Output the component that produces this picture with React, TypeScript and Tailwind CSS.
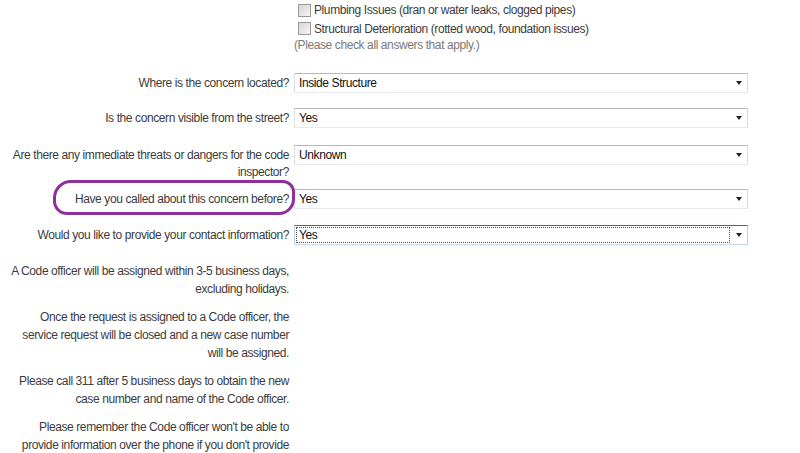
import React from "react";

const font = { fontFamily: '"Liberation Sans", Arial, sans-serif' };

function Checkbox() {
  return (
    <span className="inline-block w-[13px] h-[13px] border border-[#9a9a9a] bg-gradient-to-br from-[#d6d6d6] to-[#f4f4f4] mr-[3px] shrink-0" />
  );
}

function Arrow() {
  return (
    <span className="block w-0 h-0 border-l-[3.5px] border-r-[3.5px] border-t-[4px] border-l-transparent border-r-transparent border-t-[#222]" />
  );
}

function Select({ value, focused = false }: { value: string; focused?: boolean }) {
  if (focused) {
    return (
      <div className="relative w-[454px] h-[20px] border border-t-[#2f6ea5] border-l-[#b9cfe2] border-r-[#b9cfe2] border-b-[#c7dbea] bg-white flex items-stretch">
        <div className="flex-1 m-[1px] border border-dotted border-[#555] flex items-center pl-[2px] text-[12px] text-[#111]">
          {value}
        </div>
        <div className="w-[16px] flex items-center justify-center">
          <Arrow />
        </div>
      </div>
    );
  }
  return (
    <div className="relative w-[454px] h-[20px] border border-t-[#b9b9b9] border-l-[#dedede] border-r-[#dedede] border-b-[#e4e9ef] bg-white flex items-center">
      <div className="flex-1 pl-[4px] text-[12px] text-[#111]">{value}</div>
      <div className="w-[16px] flex items-center justify-center">
        <Arrow />
      </div>
    </div>
  );
}

function Row({
  label,
  value,
  focused,
  className = "",
}: {
  label: string;
  value: string;
  focused?: boolean;
  className?: string;
}) {
  return (
    <div className={"flex items-start gap-[5px] " + className}>
      <div className="w-[289px] text-right text-[12px] leading-[17px] pt-[2px] text-[#3c3c3c]">
        {label}
      </div>
      <Select value={value} focused={focused} />
    </div>
  );
}

export default function App() {
  return (
    <div
      className="relative w-[800px] h-[453px] overflow-hidden bg-white text-[12px] tracking-[-0.4px] text-[#3c3c3c]"
      style={font}
    >
      <div className="flex flex-col">
        <div className="ml-[298px] flex flex-col">
          <div className="h-[19px] pt-[1px] flex items-center">
            <Checkbox />
            <span>Plumbing Issues (dran or water leaks, clogged pipes)</span>
          </div>
          <div className="h-[19px] flex items-center">
            <Checkbox />
            <span>Structural Deterioration (rotted wood, foundation issues)</span>
          </div>
        </div>
        <div className="ml-[294px] h-[14px] leading-[14px] text-[#7a7a7a]">
          (Please check all answers that apply.)
        </div>

        <Row className="mt-[21px]" label="Where is the concern located?" value="Inside Structure" />
        <Row className="mt-[15px]" label="Is the concern visible from the street?" value="Yes" />
        <Row
          className="mt-[17px]"
          label="Are there any immediate threats or dangers for the code inspector?"
          value="Unknown"
        />
        <Row className="mt-[8px]" label="Have you called about this concern before?" value="Yes" />
        <Row
          className="mt-[16px]"
          label="Would you like to provide your contact information?"
          value="Yes"
          focused
        />

        <div className="w-[289px] text-right leading-[18px] text-[#3c3c3c] flex flex-col gap-[10px] mt-[17px]">
          <p>
            A Code officer will be assigned within 3-5 business days,
            <br />
            excluding holidays.
          </p>
          <p>
            Once the request is assigned to a Code officer, the
            <br />
            service request will be closed and a new case number
            <br />
            will be assigned.
          </p>
          <p>
            Please call 311 after 5 business days to obtain the new
            <br />
            case number and name of the Code officer.
          </p>
          <p>
            Please remember the Code officer won't be able to
            <br />
            provide information over the phone if you don't provide
            <br />
            your contact information.
          </p>
        </div>
      </div>

      <div className="absolute left-[53px] top-[180px] w-[242px] h-[35px] border-[3px] border-[#8f2f9c] rounded-tl-[18px] rounded-bl-[14px] rounded-tr-[12px] rounded-br-[16px] pointer-events-none" />
    </div>
  );
}
